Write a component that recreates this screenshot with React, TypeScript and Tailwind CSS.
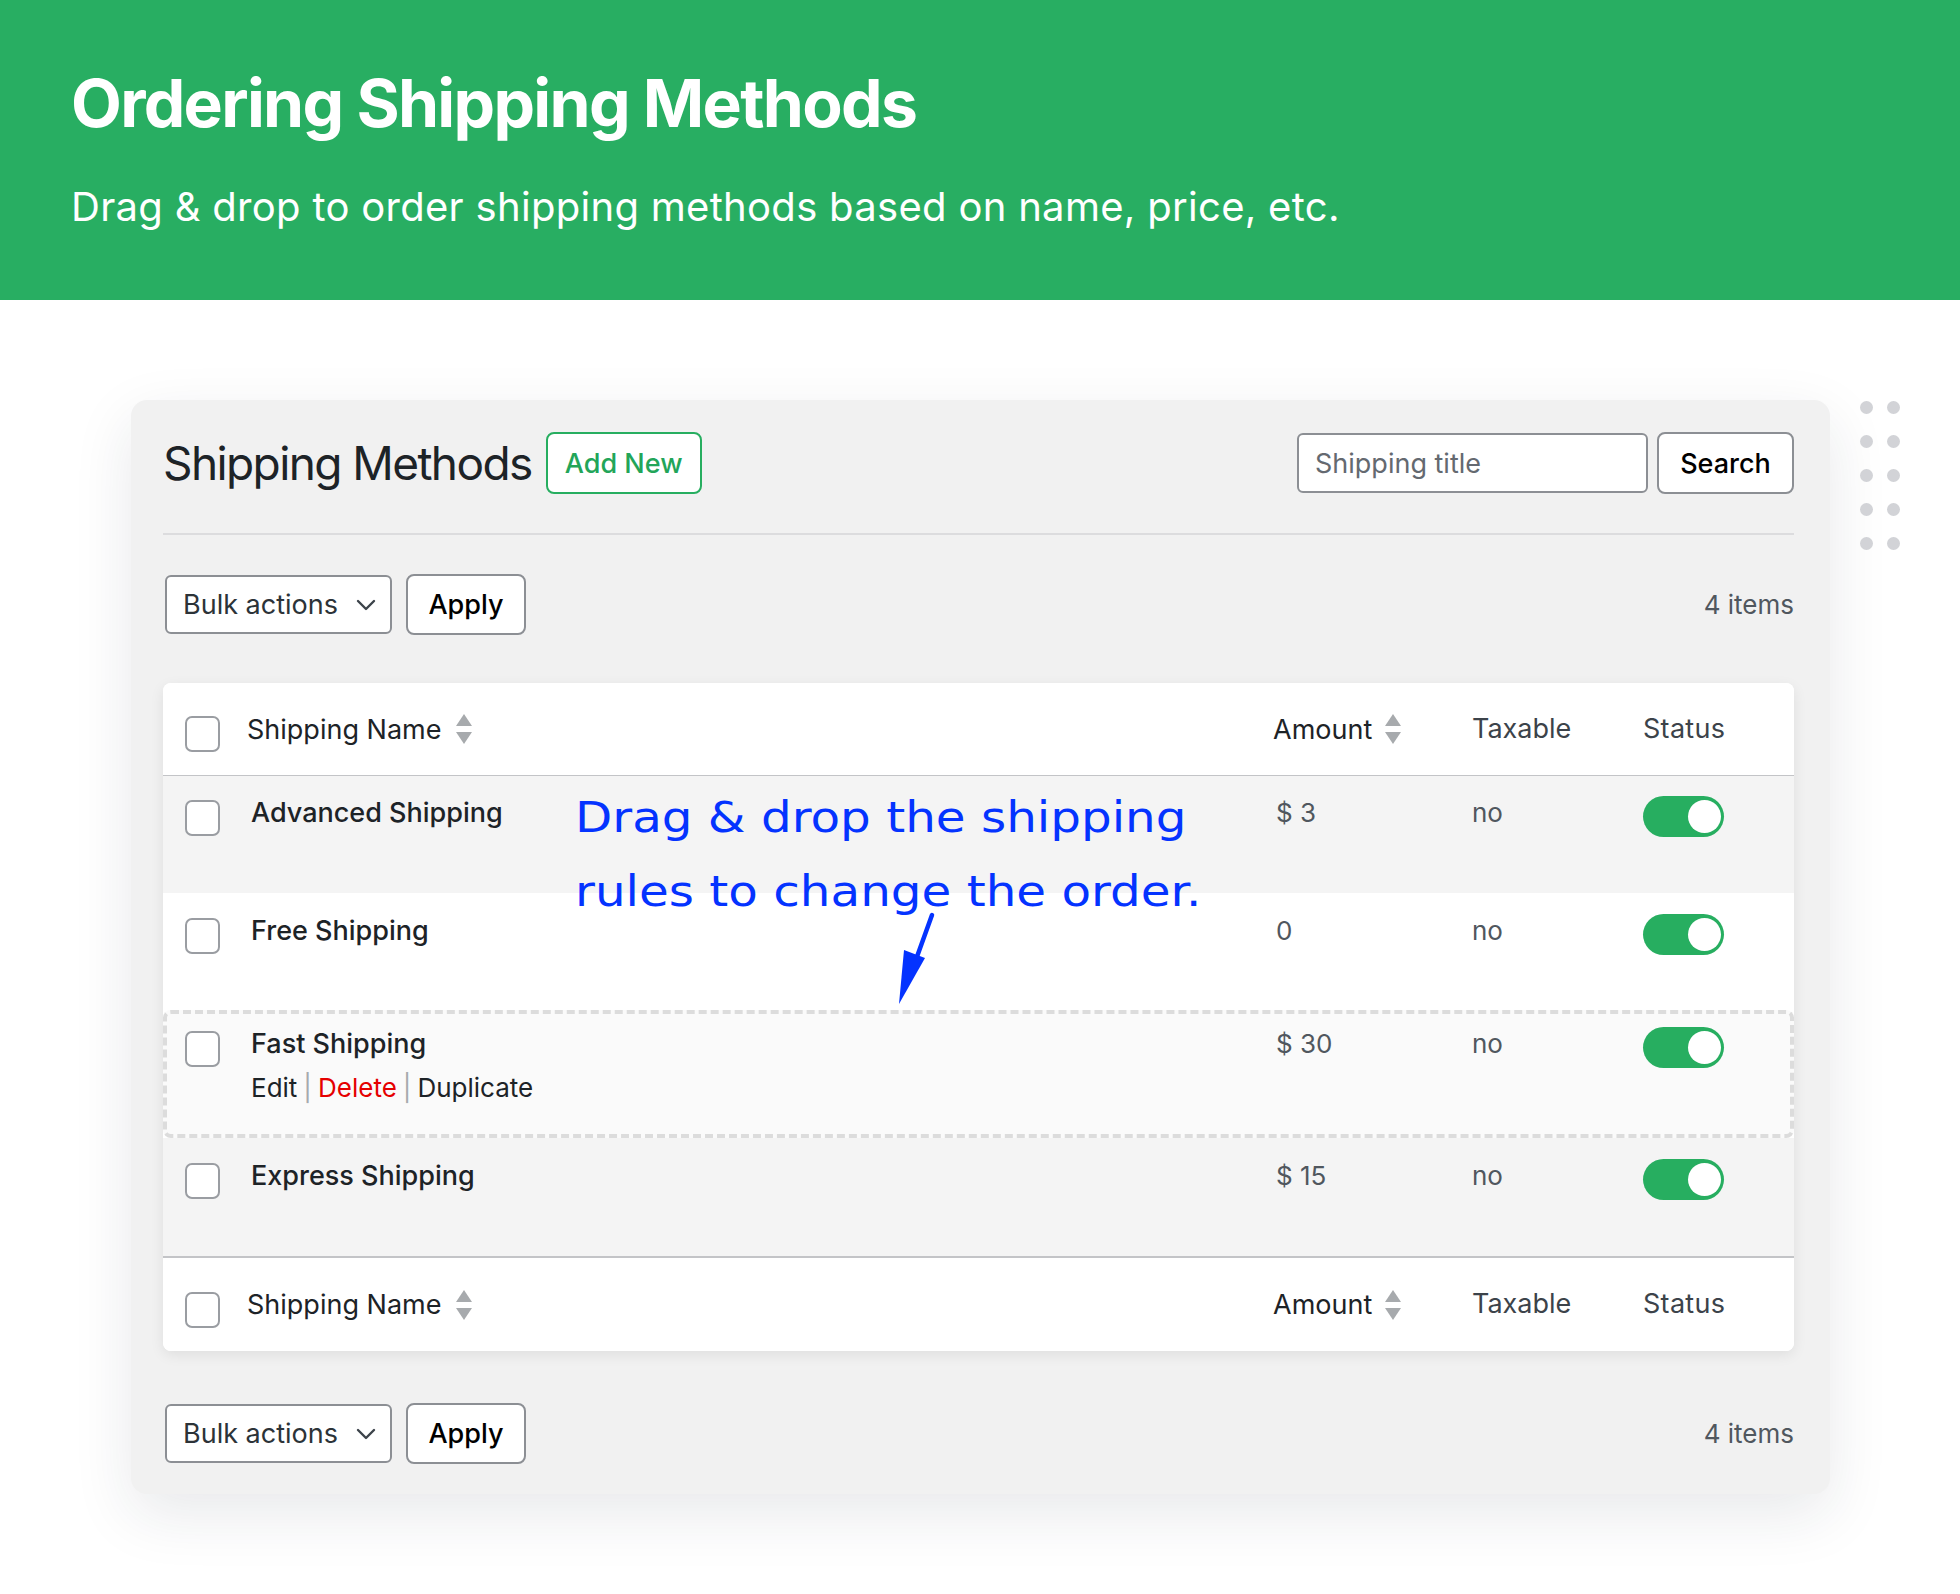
import React from "react";

function SortIcon() {
  return (
    <svg width="16" height="30" viewBox="0 0 16 30" className="shrink-0">
      <polygon points="0,12 8,0 16,12" fill="#a7aaad" />
      <polygon points="0,18 16,18 8,30" fill="#a7aaad" />
    </svg>
  );
}

function Checkbox({ className = "" }: { className?: string }) {
  return (
    <div
      className={
        "w-[35px] h-[36px] shrink-0 rounded-[7px] border-2 border-[#9a9da2] bg-white " +
        className
      }
    />
  );
}

function Toggle() {
  return (
    <div className="w-[81px] h-[41px] rounded-full bg-[#27ae60] flex items-center justify-end pr-[3px]">
      <div className="w-[33px] h-[33px] rounded-full bg-white" />
    </div>
  );
}

function BulkRow() {
  return (
    <div className="flex items-center">
      <div className="ml-[2px] flex h-[59px] w-[227px] items-center justify-between rounded-[6px] border-2 border-[#8c8f94] bg-white pl-[16px] pr-[14px]">
        <span className="text-[27px] leading-none text-[#2c3338]">Bulk actions</span>
        <svg width="20" height="12" viewBox="0 0 20 12">
          <polyline
            points="2,2 10,10 18,2"
            fill="none"
            stroke="#3c434a"
            strokeWidth="2.4"
            strokeLinecap="round"
            strokeLinejoin="round"
          />
        </svg>
      </div>
      <div className="ml-[14px] flex h-[61px] w-[120px] items-center justify-center rounded-[8px] border-2 border-[#8c8f94] bg-white">
        <span className="text-[27px] font-medium leading-none text-black">Apply</span>
      </div>
      <span className="ml-auto text-[26px] leading-none text-[#50575e]">4 items</span>
    </div>
  );
}

function HeaderRow({ top }: { top: boolean }) {
  return (
    <div
      className={
        "flex items-center bg-white " +
        (top ? "h-[93px] border-b border-[#c3c4c7]" : "h-[95px] border-t-2 border-[#c3c4c7]")
      }
    >
      <div className="w-[84px] pl-[22px] flex">
        <Checkbox className="mt-[10px]" />
      </div>
      <div className="w-[1026px] flex items-center">
        <span className="text-[27px] leading-none text-[#1d2327]">Shipping Name</span>
        <span className="ml-[15px] flex">
          <SortIcon />
        </span>
      </div>
      <div className="w-[199px] flex items-center">
        <span className="text-[27px] leading-none text-[#1d2327]">Amount</span>
        <span className="ml-[13px] flex">
          <SortIcon />
        </span>
      </div>
      <div className="w-[171px]">
        <span className="text-[27px] leading-none text-[#3c434a]">Taxable</span>
      </div>
      <div className="w-[151px]">
        <span className="text-[27px] leading-none text-[#3c434a] tracking-[0.3px]">Status</span>
      </div>
    </div>
  );
}

function DataRow({
  name,
  amount,
  bg,
  h,
  pt,
}: {
  name: string;
  amount: string;
  bg: string;
  h: string;
  pt: string;
}) {
  return (
    <div className={"flex items-start " + bg + " " + h + " " + pt}>
      <div className="w-[84px] pl-[22px] flex">
        <Checkbox className="mt-[4px]" />
      </div>
      <div className="w-[1026px] pl-[4px]">
        <div className="text-[27px] leading-[34px] font-medium text-[#1d2327]">{name}</div>
      </div>
      <div className="w-[199px] pl-[3px]">
        <div className="text-[26px] leading-[34px] text-[#50575e]">{amount}</div>
      </div>
      <div className="w-[171px]">
        <div className="text-[26px] leading-[34px] text-[#50575e]">no</div>
      </div>
      <div className="w-[151px]">
        <Toggle />
      </div>
    </div>
  );
}

export default function App() {
  return (
    <div className="relative w-[1960px] h-[1594px] overflow-hidden bg-white font-['Inter','Noto_Sans',sans-serif]">
      <header className="h-[300px] bg-[#28ae62] pl-[71px] pt-[63px]">
        <h1 className="text-[66px] leading-[80px] font-bold text-white tracking-[-1.7px]">
          Ordering Shipping Methods
        </h1>
        <p className="mt-[40px] text-[40px] leading-[48px] text-white tracking-[0.3px]">
          Drag &amp; drop to order shipping methods based on name, price, etc.
        </p>
      </header>

      <div className="ml-[131px] mt-[100px] w-[1699px] rounded-[16px] bg-[#f1f1f1] pl-[32px] pr-[36px] pt-[32px] pb-[30px] shadow-[0_20px_60px_rgba(30,41,59,0.10)]">
        <div className="flex h-[62px] items-center">
          <h2 className="text-[46px] leading-none text-[#1d2327] tracking-[-1.6px]">Shipping Methods</h2>
          <div className="ml-[14px] flex h-[62px] w-[156px] items-center justify-center rounded-[8px] border-2 border-[#27ae60] bg-white">
            <span className="text-[27px] font-medium leading-none text-[#22a559]">Add New</span>
          </div>
          <div className="ml-auto flex h-[60px] w-[351px] items-center rounded-[6px] border-2 border-[#8c8f94] bg-white pl-[16px]">
            <span className="text-[27px] leading-none text-[#646970]">Shipping title</span>
          </div>
          <div className="ml-[9px] flex h-[62px] w-[137px] items-center justify-center rounded-[8px] border-2 border-[#8c8f94] bg-white">
            <span className="text-[27px] font-medium leading-none text-black">Search</span>
          </div>
        </div>

        <div className="mt-[39px] h-[2px] bg-[#dcdcde]" />

        <div className="mt-[39px]">
          <BulkRow />
        </div>

        <div className="mt-[48px] overflow-hidden rounded-[8px] bg-white shadow-[0_4px_14px_rgba(0,0,0,0.08)]">
          <HeaderRow top={true} />
          <DataRow name="Advanced Shipping" amount="$ 3" bg="bg-[#f4f4f4]" h="h-[117px]" pt="pt-[20px]" />
          <DataRow name="Free Shipping" amount="0" bg="bg-white" h="h-[117px]" pt="pt-[21px]" />
          <div className="flex h-[128px] items-start rounded-[8px] border-4 border-dashed border-[#dcdcdc] bg-[#fafafa] pt-[13px]">
            <div className="w-[80px] pl-[18px] flex">
              <Checkbox className="mt-[4px]" />
            </div>
            <div className="w-[1026px] pl-[4px]">
              <div className="text-[27px] leading-[34px] font-medium text-[#1d2327]">Fast Shipping</div>
              <div className="mt-[9px] text-[26px] leading-[36px] text-[#1d2327]">
                <span>Edit</span>
                <span className="mx-[6px] text-[#a7aaad]">|</span>
                <span className="text-[#e50000]">Delete</span>
                <span className="mx-[6px] text-[#a7aaad]">|</span>
                <span>Duplicate</span>
              </div>
            </div>
            <div className="w-[199px] pl-[3px]">
              <div className="text-[26px] leading-[34px] text-[#50575e]">$ 30</div>
            </div>
            <div className="w-[171px]">
              <div className="text-[26px] leading-[34px] text-[#50575e]">no</div>
            </div>
            <div className="w-[147px]">
              <Toggle />
            </div>
          </div>
          <DataRow name="Express Shipping" amount="$ 15" bg="bg-[#f4f4f4]" h="h-[118px]" pt="pt-[21px]" />
          <HeaderRow top={false} />
        </div>

        <div className="mt-[52px]">
          <BulkRow />
        </div>
      </div>

      {/* decorative dots */}
      <div className="absolute left-[1860px] top-[401px] grid grid-cols-2 gap-x-[14px] gap-y-[21px]">
        {Array.from({ length: 10 }).map((_, i) => (
          <div key={i} className="h-[13px] w-[13px] rounded-full bg-[#d2d3d7]" />
        ))}
      </div>

      {/* annotation */}
      <div className="absolute left-[575px] top-[780px] origin-left scale-x-[1.125] whitespace-nowrap font-['DejaVu_Sans',sans-serif] text-[43px] leading-[74px] text-[#0433ff]">
        <div>Drag &amp; drop the shipping</div>
        <div>rules to change the order.</div>
      </div>
      <svg
        className="absolute left-[880px] top-[905px]"
        width="70"
        height="110"
        viewBox="880 905 70 110"
      >
        <line x1="932" y1="915" x2="914" y2="965" stroke="#0433ff" strokeWidth="4.5" strokeLinecap="round" />
        <polygon points="899,1004 904,950 925,958" fill="#0433ff" />
      </svg>
    </div>
  );
}
